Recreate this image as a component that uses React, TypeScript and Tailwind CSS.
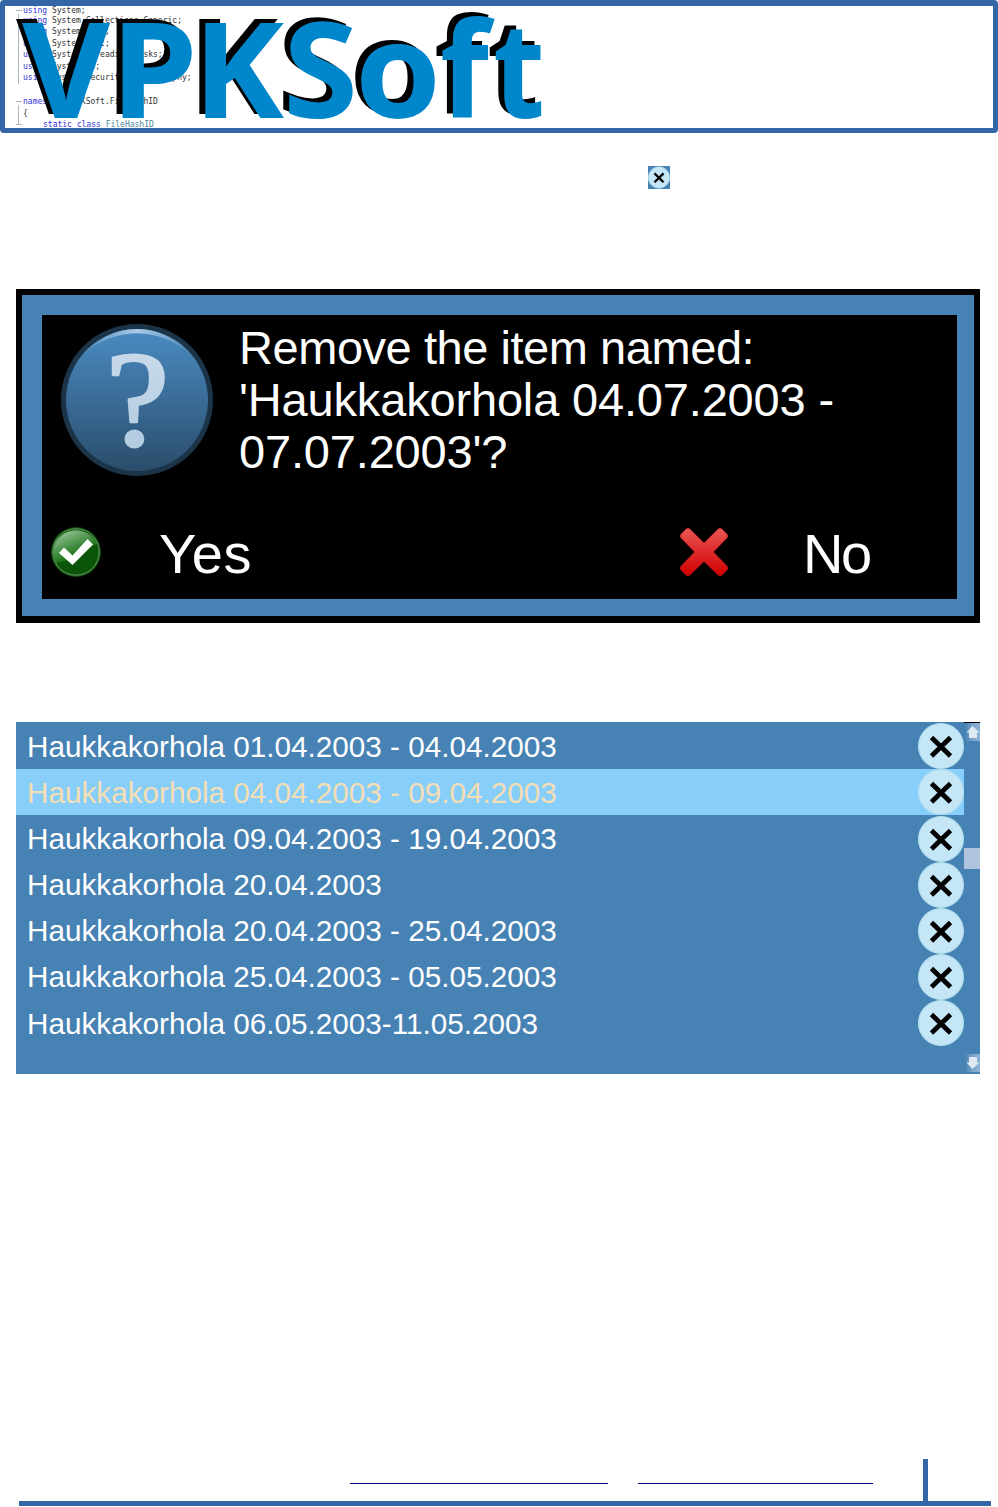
import React from "react";
import clsx from "clsx";

type LogoLetter = {
  char: string;
  x: number;
  width: number;
};

const codeLines = [
  { y: 13, keyword: "using", rest: " System;" },
  { y: 23, keyword: "using", rest: " System.Collections.Generic;" },
  { y: 34, keyword: "using", rest: " System.Linq;" },
  { y: 46, keyword: "using", rest: " System.Text;" },
  { y: 57, keyword: "using", rest: " System.Threading.Tasks;" },
  { y: 69, keyword: "using", rest: " System.IO;" },
  { y: 80, keyword: "using", rest: " System.Security.Cryptography;" },
  { y: 104, keyword: "namespace", rest: " VPKSoft.FileHashID" },
  { y: 116, keyword: "", rest: "{" },
];

const logoLetters: LogoLetter[] = [
  { char: "V", x: 22, width: 88 },
  { char: "P", x: 110, width: 88 },
  { char: "K", x: 193, width: 91 },
  { char: "S", x: 283, width: 75 },
  { char: "o", x: 355, width: 86 },
  { char: "f", x: 440, width: 49 },
  { char: "t", x: 493, width: 52 },
];

const items = [
  "Haukkakorhola 01.04.2003 - 04.04.2003",
  "Haukkakorhola 04.04.2003 - 09.04.2003",
  "Haukkakorhola 09.04.2003 - 19.04.2003",
  "Haukkakorhola 20.04.2003",
  "Haukkakorhola 20.04.2003 - 25.04.2003",
  "Haukkakorhola 25.04.2003 - 05.05.2003",
  "Haukkakorhola 06.05.2003-11.05.2003",
];

const LogoText = ({ color, dx, dy }: { color: string; dx: number; dy: number }) => (
  <g fill={color} fontFamily="Open Sans" fontWeight="700" fontSize="133">
    {logoLetters.map((l) => (
      <text
        key={l.char}
        x={l.x + dx}
        y={118 + dy}
        textLength={l.width}
        lengthAdjust="spacingAndGlyphs"
      >
        {l.char}
      </text>
    ))}
  </g>
);

const Header = () => (
  <header className="h-[133px] overflow-hidden rounded-[4px] border-x-[5px] border-t-[6px] border-b-[5px] border-[#3465a4]">
    <svg width="545" height="122" viewBox="5 6 545 122" className="block">
      <g fontFamily="DejaVu Sans Mono" fontSize="8" xmlSpace="preserve">
        {codeLines.map((line) => (
          <text key={line.y} x="23" y={line.y} fill="#333333">
            <tspan fill="#3333dd">{line.keyword}</tspan>
            {line.rest}
          </text>
        ))}
        <text x="43" y="127" fill="#3333dd">
          static class <tspan fill="#4a8799">FileHashID</tspan>
        </text>
      </g>
      <path
        d="M16 10.500h6M18.500 14v70M16 101.500h6M18.500 105v20M16 124.500h6"
        stroke="#b5b5b5"
        fill="none"
      />
      <LogoText color="#000000" dx={-6} dy={-4.500} />
      <LogoText color="#0086cb" dx={0} dy={0} />
    </svg>
  </header>
);

const RemoveIcon = ({ className }: { className?: string }) => (
  <svg viewBox="0 0 46 46" className={clsx("block shrink-0", className)}>
    <circle cx="23" cy="23" r="22.400" fill="#c5e6f6" stroke="#b3e0ee" strokeWidth="1.200" />
    <path d="M13.500 14.500l19 18.500M32.500 14.500L13.500 33" stroke="#000" strokeWidth="4.800" />
  </svg>
);

const QuestionIcon = () => (
  <svg width="152" height="152" viewBox="0 0 152 152" className="block">
    <defs>
      <linearGradient id="question-fill" x1="0" y1="0" x2="0" y2="1">
        <stop offset="0" stopColor="#4a8bc2" />
        <stop offset="1" stopColor="#2a4d6b" />
      </linearGradient>
      <linearGradient id="question-shine" x1="0" y1="0" x2="1" y2="0">
        <stop offset="0" stopColor="#a9c9e5" stopOpacity="0" />
        <stop offset="0.5" stopColor="#a9c9e5" />
        <stop offset="1" stopColor="#a9c9e5" stopOpacity="0" />
      </linearGradient>
      <linearGradient id="question-mark" x1="0" y1="0" x2="0" y2="1">
        <stop offset="0" stopColor="#cfdeeb" />
        <stop offset="1" stopColor="#abc7df" />
      </linearGradient>
    </defs>
    <circle cx="76" cy="76" r="76" fill="#1c3448" />
    <circle cx="76" cy="76" r="71" fill="url(#question-fill)" />
    <path
      d="M19 34A70.500 70.500 0 0 1 133 34A78 78 0 0 0 19 34"
      fill="url(#question-shine)"
    />
    <text
      x="45"
      y="121"
      fontFamily="Liberation Serif"
      fontSize="136"
      textLength="63"
      lengthAdjust="spacingAndGlyphs"
      fill="url(#question-mark)"
      stroke="url(#question-mark)"
      strokeWidth="3"
      strokeLinejoin="round"
    >
      ?
    </text>
  </svg>
);

const YesIcon = () => (
  <svg width="50" height="50" viewBox="0 0 50 50" className="block">
    <defs>
      <linearGradient id="yes-shine" x1="0.1" y1="0" x2="0.6" y2="0.8">
        <stop offset="0" stopColor="#a5cba5" />
        <stop offset="1" stopColor="#0d6b0a" />
      </linearGradient>
    </defs>
    <circle cx="25" cy="25" r="25" fill="#0b4d09" />
    <circle cx="25" cy="25" r="23.200" fill="#0a5508" stroke="#6c9d68" strokeWidth="1" />
    <path d="M2 25A23 23 0 0 1 46 17Q36 20 28 27T5 36Q2 31 2 25" fill="url(#yes-shine)" />
    <path d="M8 26l5-5.500 8.500 8L36.500 12l5.500 5.500L21.500 38z" fill="#fff" />
  </svg>
);

const NoIcon = () => (
  <svg width="50" height="50" viewBox="0 0 50 50" className="block">
    <defs>
      <linearGradient id="no-fill" x1="0" y1="0" x2="0" y2="1">
        <stop offset="0" stopColor="#ea5555" />
        <stop offset="1" stopColor="#d10000" />
      </linearGradient>
    </defs>
    <path
      d="M7 2Q9 0 11 2L25 16 39 2Q41 0 43 2L48 7Q50 9 48 11L34.500 25 48 39Q50 41 48 43L43 48Q41 50 39 48L25 34.500 11 48Q9 50 7 48L2 43Q0 41 2 39L15.500 25 2 11Q0 9 2 7Z"
      fill="url(#no-fill)"
      stroke="#a51212"
      strokeWidth="0.800"
    />
  </svg>
);

const ConfirmDialog = () => (
  <section className="ml-4 h-[334px] w-[964px] border-x-[6px] border-t-[6px] border-b-[7px] border-black">
    <div className="h-full border-t-[20px] border-r-[17px] border-b-[17px] border-l-[20px] border-[#4682b4]">
      <div className="flex h-full flex-col justify-between bg-black text-white">
        <div className="flex pt-[9px] pl-[19px]">
          <QuestionIcon />
          <p className="-mt-[2px] ml-[26px] text-[47px] leading-[52px] whitespace-nowrap">
            <span className="tracking-[-0.450px]">Remove the item named:</span>
            <br />
            <span className="tracking-[-0.170px]">&apos;Haukkakorhola 04.07.2003 -</span>
            <br />
            <span className="tracking-[-0.170px]">07.07.2003&apos;?</span>
          </p>
        </div>
        <div className="flex items-center pb-[20px] pl-[9px] text-[56px] leading-[50px]">
          <YesIcon />
          <span className="w-[519px] pt-[5px] pl-[58px] tracking-[0.600px]">Yes</span>
          <div className="ml-[59px]">
            <NoIcon />
          </div>
          <span className="pt-[5px] pl-[74px] tracking-[-2.500px]">No</span>
        </div>
      </div>
    </div>
  </section>
);

const ScrollArrow = ({ down }: { down?: boolean }) => (
  <svg
    width="16"
    height="18"
    viewBox="0 0 16 18"
    className={clsx("block", down && "-scale-y-100")}
  >
    <defs>
      <linearGradient id="arrow-fill" x1="0" y1="0" x2="1" y2="0">
        <stop offset="0" stopColor="#4682b4" />
        <stop offset="0.5" stopColor="#7da5ca" />
        <stop offset="1" stopColor="#8db3d4" />
      </linearGradient>
    </defs>
    <rect x="1" width="15" height="18" fill="url(#arrow-fill)" />
    <path d="M8.500 3L2.500 9.500h2.500V15h8V9.500h2.500z" fill="#dfe9f2" />
  </svg>
);

const ItemList = () => (
  <section className="mt-[99px] ml-4 flex h-[352px] w-[964px] bg-[#4682b4]">
    <ul className="w-[948px] pt-[1.200px]">
      {items.map((item, i) => (
        <li
          key={item}
          className={clsx(
            "flex h-[46.150px] items-center justify-between pl-[11px] text-[29.700px] leading-[46px]",
            i === 1 ? "bg-[#87cefa] text-[#f5deb3]" : "text-white"
          )}
        >
          <span className="pt-px whitespace-nowrap">{item}</span>
          <RemoveIcon className="size-[46px]" />
        </li>
      ))}
    </ul>
    <div className="flex w-4 flex-col border-t border-black">
      <ScrollArrow />
      <div className="mt-[107px] h-[21px] bg-[#b0c4de]" />
      <div className="mt-auto pb-[2px]">
        <ScrollArrow down />
      </div>
    </div>
  </section>
);

const Footer = () => (
  <footer className="mt-auto pb-px">
    <div className="flex h-[42px] items-start">
      <div className="mt-6 ml-[350px] h-px w-[258px] bg-[#000080]" />
      <div className="mt-6 ml-[30px] h-px w-[235px] bg-[#000080]" />
      <div className="ml-[50px] h-[42px] w-[5px] bg-[#3465a4]" />
    </div>
    <div className="mr-[7px] ml-[19px] h-[5px] bg-[#3465a4]" />
  </footer>
);

export default function App() {
  return (
    <div className="flex h-[1507px] w-[998px] flex-col bg-white font-['Liberation_Sans',Arial,sans-serif]">
      <Header />
      <div className="mt-[33px] mb-[100px] ml-[648px] h-[23px] w-[22px] bg-[#4682b4]">
        <RemoveIcon className="h-[23px] w-[22px]" />
      </div>
      <ConfirmDialog />
      <ItemList />
      <Footer />
    </div>
  );
}
